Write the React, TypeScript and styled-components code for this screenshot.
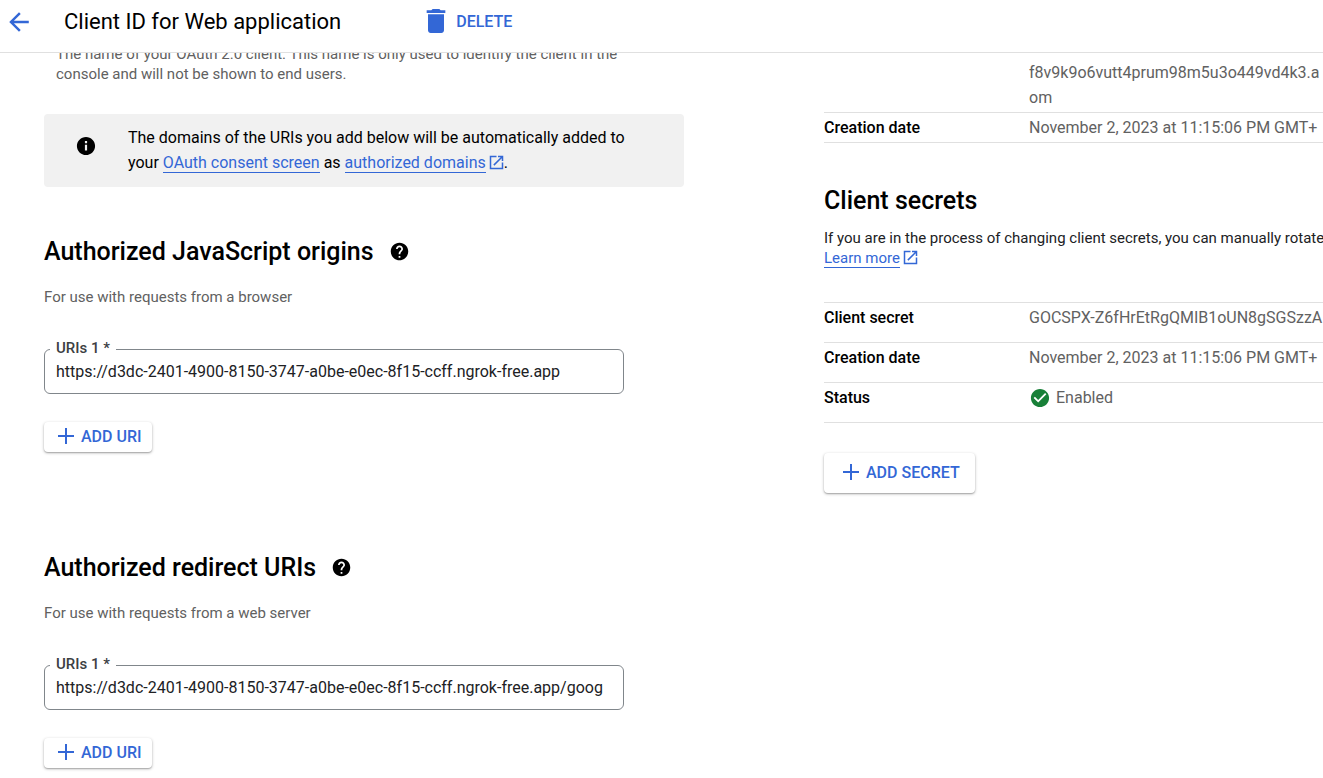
import React, { useId } from 'react';
import styled, { createGlobalStyle } from 'styled-components';

const blue = '#3367d6';
const muted = '#616161';
const line = '#e0e0e0';

const GlobalStyle = createGlobalStyle`
  *, *::before, *::after { box-sizing: border-box; }
  body {
    margin: 0;
    background: #fff;
    color: #000;
    font-family: Roboto, "Liberation Sans", sans-serif;
    font-size: 16px;
    line-height: 25px;
  }
  h1, h2, p { margin: 0; }
`;

const Page = styled.div`
  min-height: 100vh;
  display: flex;
  flex-direction: column;
`;

const Header = styled.header`
  display: flex;
  align-items: center;
  height: 53px;
  padding: 0 8px 8px;
  background: #fff;
  border-bottom: 1px solid ${line};
`;

const Title = styled.h1`
  margin-left: 34px;
  font-size: 22px;
  font-weight: 400;
  line-height: 30px;
`;

const PlainButton = styled.button`
  display: flex;
  align-items: center;
  gap: 8px;
  padding: 0;
  border: 0;
  background: none;
  color: ${blue};
  font: inherit;
  font-weight: 500;
  cursor: pointer;
`;

const DeleteButton = styled(PlainButton)`
  margin-left: 83px;
  padding-bottom: 2px;
`;

const RaisedButton = styled(PlainButton)<{ $large?: boolean }>`
  gap: 3px;
  height: ${(p) => (p.$large ? 40 : 30)}px;
  padding: 0 ${(p) => (p.$large ? 15 : 10)}px 2px;
  border-radius: 4px;
  background: #fff;
  box-shadow: 0 1px 3px rgba(0, 0, 0, 0.3), 0 1px 1px rgba(0, 0, 0, 0.14);
`;

const Main = styled.main`
  flex: 1;
  display: flex;
  align-items: flex-start;
  gap: 140px;
  padding-left: 44px;
  overflow: hidden;
`;

const FormColumn = styled.div`
  flex: 0 1 640px;
  min-width: 360px;
  margin-top: -9px;
  padding-bottom: 10px;
`;

const DetailColumn = styled.aside`
  flex: 1 1 0;
  min-width: 0;
  padding-top: 7px;
  white-space: nowrap;
`;

const NameHint = styled.p`
  max-width: 600px;
  padding-left: 12px;
  color: ${muted};
  font-size: 15px;
  line-height: 20px;
`;

const Notice = styled.div`
  display: flex;
  align-items: center;
  gap: 32px;
  margin: 30px 0 50px;
  padding: 11px 48px 12px 32px;
  border-radius: 4px;
  background: #f1f1f1;
`;

const NoticeIcon = styled.span`
  display: flex;
  margin-bottom: 8px;
`;

const Link = styled.a`
  color: ${blue};
  text-decoration: none;
  border-bottom: 1px solid ${blue};
`;

const ExternalMark = styled.span`
  display: inline-flex;
  margin-left: 3px;
  vertical-align: -2px;
`;

const Section = styled.section`
  & + & { margin-top: 101px; }
`;

const SectionTitle = styled.h2`
  display: flex;
  align-items: center;
  gap: 15px;
  font-size: 25px;
  font-weight: 500;
  line-height: 30px;

  svg { margin-bottom: 2px; }
`;

const SectionHint = styled.p`
  margin: 20px 0 33px;
  color: ${muted};
  font-size: 15px;
  line-height: 20px;
`;

const Field = styled.fieldset`
  max-width: 580px;
  margin: 0 0 28px;
  padding: 0 12px 8px 5px;
  border: 1px solid #80868b;
  border-radius: 6px;
`;

const FieldLegend = styled.legend`
  padding: 0 6px 2px;
  color: #3c4043;
  font-size: 15px;
  font-weight: 500;
  line-height: 16px;
`;

const FieldLabel = styled.label`
  display: block;
`;

const FieldInput = styled.input`
  display: block;
  width: 100%;
  height: 27px;
  padding: 0 0 0 6px;
  border: 0;
  outline: 0;
  background: none;
  color: #202124;
  font: inherit;
`;

const DetailTable = styled.table`
  width: 100%;
  border-collapse: separate;
  border-spacing: 0;
`;

const LabelCell = styled.th`
  width: 205px;
  min-width: 205px;
  text-align: left;
  font-weight: 500;
`;

const ValueCell = styled.td`
  color: ${muted};
`;

const DetailRow = styled.tr<{ $tall?: boolean }>`
  th, td {
    padding: 2px 0 ${(p) => (p.$tall ? 12 : 2)}px;
    border-bottom: 1px solid ${line};
    vertical-align: top;
  }
`;

const ClientIdTail = styled(DetailRow)`
  th, td { padding-top: 0; }
`;

const SecretsTitle = styled.h2`
  margin-top: 43px;
  font-size: 25px;
  font-weight: 500;
  line-height: 30px;
`;

const SecretsText = styled.p`
  margin: 12px 0 34px;
  color: #202124;
  font-size: 15px;
  line-height: 20px;
`;

const SecretsTable = styled(DetailTable)`
  margin-bottom: 30px;
  border-top: 1px solid ${line};
`;

const Status = styled.span`
  display: flex;
  align-items: center;
  gap: 6px;
  padding-left: 1px;
`;

const paths = {
  back: 'M20 11H7.83l5.59-5.59L12 4l-8 8 8 8 1.41-1.41L7.83 13H20v-2z',
  delete: 'M6 19c0 1.1.9 2 2 2h8c1.1 0 2-.9 2-2V7H6v12zM19 4h-3.5l-1-1h-5l-1 1H5v2h14V4z',
  info: 'M12 2C6.48 2 2 6.48 2 12s4.48 10 10 10 10-4.48 10-10S17.52 2 12 2zm1.2 15h-2.4v-6.5h2.4V17zm0-8.1h-2.4V6.5h2.4v2.4z',
  help: 'M12 2C6.48 2 2 6.48 2 12s4.48 10 10 10 10-4.48 10-10S17.52 2 12 2zm1 17h-2v-2h2v2zm2.07-7.75l-.9.92C13.45 12.9 13 13.5 13 15h-2v-.5c0-1.1.45-2.1 1.17-2.83l1.24-1.26c.37-.36.59-.86.59-1.41 0-1.1-.9-2-2-2s-2 .9-2 2H8c0-2.21 1.79-4 4-4s4 1.79 4 4c0 .88-.36 1.68-.93 2.25z',
  open: 'M19 19H5V5h7V3H3v18h18v-9h-2v7zM14 3v2h3.59l-9.83 9.83 1.41 1.41L19 6.41V10h2V3h-7z',
  add: 'M20 13h-7v7h-2v-7H4v-2h7V4h2v7h7v2z',
  check: 'M12 2C6.48 2 2 6.48 2 12s4.48 10 10 10 10-4.48 10-10S17.52 2 12 2zm-2 15l-5-5 1.41-1.41L10 14.17l7.59-7.59L19 8l-9 9z',
};

type IconProps = { name: keyof typeof paths; size: number; color?: string; box?: string };

function Icon({ name, size, color = 'currentColor', box = '0 0 24 24' }: IconProps) {
  return (
    <svg width={size} height={size} viewBox={box} fill={color} aria-hidden="true">
      <path d={paths[name]} />
    </svg>
  );
}

function External() {
  return (
    <ExternalMark>
      <Icon name="open" size={15} color={blue} box="2 2 20 20" />
    </ExternalMark>
  );
}

type UriSectionProps = { title: string; hint: string; uri: string };

function UriSection({ title, hint, uri }: UriSectionProps) {
  const id = useId();
  return (
    <Section>
      <SectionTitle>
        {title}
        <Icon name="help" size={21} />
      </SectionTitle>
      <SectionHint>{hint}</SectionHint>
      <Field>
        <FieldLegend>
          <FieldLabel htmlFor={id}>URIs 1 *</FieldLabel>
        </FieldLegend>
        <FieldInput id={id} type="text" defaultValue={uri} />
      </Field>
      <RaisedButton type="button">
        <Icon name="add" size={24} />
        ADD URI
      </RaisedButton>
    </Section>
  );
}

export default function App() {
  return (
    <Page>
      <GlobalStyle />
      <Header>
        <PlainButton type="button" aria-label="Back">
          <Icon name="back" size={22} box="3 3 18 18" />
        </PlainButton>
        <Title>Client ID for Web application</Title>
        <DeleteButton type="button">
          <Icon name="delete" size={24} box="3 3 18 18" />
          DELETE
        </DeleteButton>
      </Header>
      <Main>
        <FormColumn>
          <NameHint>
            The name of your OAuth 2.0 client. This name is only used to identify the client in the
            console and will not be shown to end users.
          </NameHint>
          <Notice>
            <NoticeIcon>
              <Icon name="info" size={20} box="1 1 22 22" />
            </NoticeIcon>
            <p>
              The domains of the URIs you add below will be automatically added to your{' '}
              <Link href="#consent">OAuth consent screen</Link> as{' '}
              <Link href="#domains">authorized domains</Link>
              <External />.
            </p>
          </Notice>
          <UriSection
            title="Authorized JavaScript origins"
            hint="For use with requests from a browser"
            uri="https://d3dc-2401-4900-8150-3747-a0be-e0ec-8f15-ccff.ngrok-free.app"
          />
          <UriSection
            title="Authorized redirect URIs"
            hint="For use with requests from a web server"
            uri="https://d3dc-2401-4900-8150-3747-a0be-e0ec-8f15-ccff.ngrok-free.app/goog"
          />
        </FormColumn>
        <DetailColumn>
          <DetailTable>
            <tbody>
              <ClientIdTail>
                <LabelCell />
                <ValueCell>
                  f8v9k9o6vutt4prum98m5u3o449vd4k3.a
                  <br />
                  om
                </ValueCell>
              </ClientIdTail>
              <DetailRow>
                <LabelCell scope="row">Creation date</LabelCell>
                <ValueCell>November 2, 2023 at 11:15:06 PM GMT+</ValueCell>
              </DetailRow>
            </tbody>
          </DetailTable>
          <SecretsTitle>Client secrets</SecretsTitle>
          <SecretsText>
            If you are in the process of changing client secrets, you can manually rotate
            <br />
            <Link href="#learn">Learn more</Link>
            <External />
          </SecretsText>
          <SecretsTable>
            <tbody>
              <DetailRow $tall>
                <LabelCell scope="row">Client secret</LabelCell>
                <ValueCell>GOCSPX-Z6fHrEtRgQMIB1oUN8gSGSzzA</ValueCell>
              </DetailRow>
              <DetailRow $tall>
                <LabelCell scope="row">Creation date</LabelCell>
                <ValueCell>November 2, 2023 at 11:15:06 PM GMT+</ValueCell>
              </DetailRow>
              <DetailRow $tall>
                <LabelCell scope="row">Status</LabelCell>
                <ValueCell>
                  <Status>
                    <Icon name="check" size={20} color="#188038" box="1 1 22 22" />
                    Enabled
                  </Status>
                </ValueCell>
              </DetailRow>
            </tbody>
          </SecretsTable>
          <RaisedButton type="button" $large>
            <Icon name="add" size={24} />
            ADD SECRET
          </RaisedButton>
        </DetailColumn>
      </Main>
    </Page>
  );
}
